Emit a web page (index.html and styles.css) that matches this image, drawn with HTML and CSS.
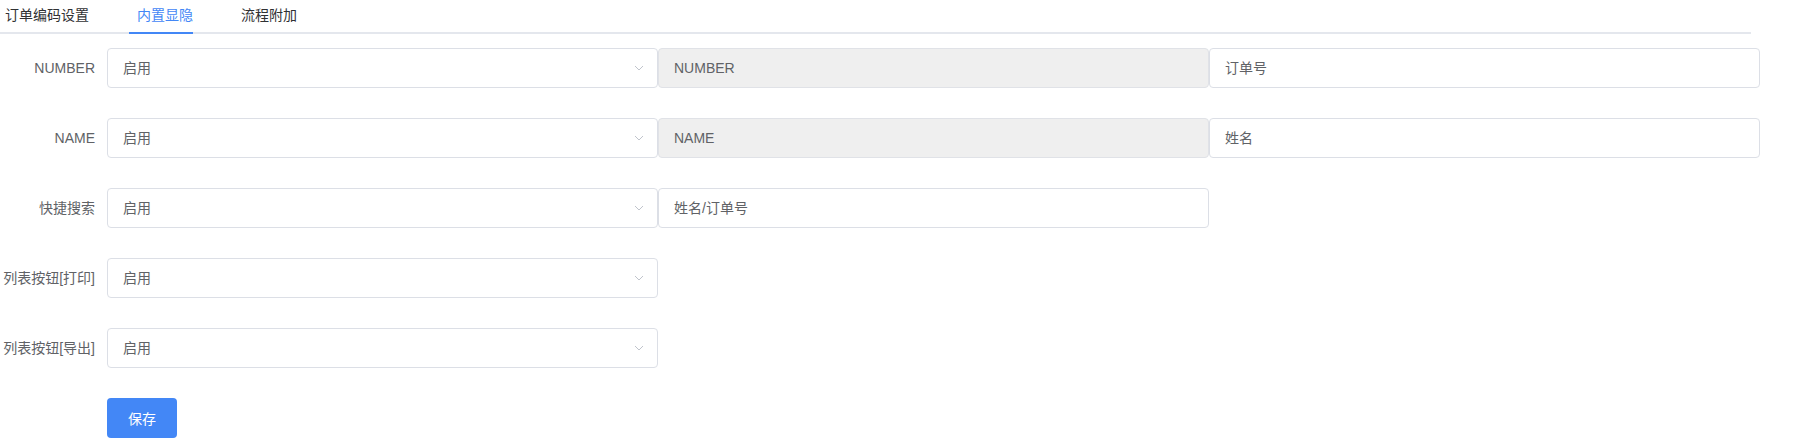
FILE: index.html
```html
<!DOCTYPE html>
<html lang="zh-CN">
<head>
<meta charset="utf-8">
<title>内置显隐</title>
<link rel="stylesheet" href="styles.css">
</head>
<body>
<div class="page">
  <div class="tabs">
    <div class="tab tab-first">订单编码设置</div>
    <div class="tab tab-active">内置显隐<span class="active-bar"></span></div>
    <div class="tab tab-last">流程附加</div>
  </div>

  <form class="form">
    <div class="row">
      <label class="label">NUMBER</label>
      <div class="select"><span class="value">启用</span><svg class="arrow" width="10" height="6" viewBox="0 0 10 6"><polyline points="1,1 5,5 9,1" fill="none" stroke="#c0c4cc" stroke-width="1"/></svg></div>
      <div class="input input-disabled">NUMBER</div>
      <div class="input">订单号</div>
    </div>
    <div class="row">
      <label class="label">NAME</label>
      <div class="select"><span class="value">启用</span><svg class="arrow" width="10" height="6" viewBox="0 0 10 6"><polyline points="1,1 5,5 9,1" fill="none" stroke="#c0c4cc" stroke-width="1"/></svg></div>
      <div class="input input-disabled">NAME</div>
      <div class="input">姓名</div>
    </div>
    <div class="row">
      <label class="label">快捷搜索</label>
      <div class="select"><span class="value">启用</span><svg class="arrow" width="10" height="6" viewBox="0 0 10 6"><polyline points="1,1 5,5 9,1" fill="none" stroke="#c0c4cc" stroke-width="1"/></svg></div>
      <div class="input">姓名/订单号</div>
    </div>
    <div class="row">
      <label class="label">列表按钮[打印]</label>
      <div class="select"><span class="value">启用</span><svg class="arrow" width="10" height="6" viewBox="0 0 10 6"><polyline points="1,1 5,5 9,1" fill="none" stroke="#c0c4cc" stroke-width="1"/></svg></div>
    </div>
    <div class="row">
      <label class="label">列表按钮[导出]</label>
      <div class="select"><span class="value">启用</span><svg class="arrow" width="10" height="6" viewBox="0 0 10 6"><polyline points="1,1 5,5 9,1" fill="none" stroke="#c0c4cc" stroke-width="1"/></svg></div>
    </div>
    <div class="actions">
      <button type="button" class="btn-primary">保存</button>
    </div>
  </form>
</div>
</body>
</html>
```

FILE: styles.css
```css
* { box-sizing: border-box; }
html, body {
  margin: 0;
  padding: 0;
  background: #ffffff;
}
body {
  font-family: "Liberation Sans", "Noto Sans CJK SC", sans-serif;
  font-size: 14px;
  color: #606266;
}
.page {
  width: 1803px;
}
.tabs {
  display: flex;
  width: 1751px;
  height: 34px;
  border-bottom: 2px solid #e4e7ed;
}
.tab {
  position: relative;
  height: 32px;
  line-height: 30px;
  padding: 0 24px;
  color: #303133;
  font-size: 14px;
  white-space: nowrap;
}
.tab-first { padding-left: 5px; }
.tab-active { color: #4387f6; }
.active-bar {
  position: absolute;
  left: 16px;
  bottom: -2px;
  width: 64px;
  height: 2px;
  background: #4387f6;
}
.form {
  margin-top: 14px;
}
.row {
  display: grid;
  grid-template-columns: 107px 551px 551px 551px;
  height: 40px;
  margin-bottom: 30px;
}
.label {
  text-align: right;
  padding-right: 12px;
  line-height: 40px;
  color: #606266;
  white-space: nowrap;
}
.select, .input {
  height: 40px;
  border: 1px solid #dcdfe6;
  border-radius: 4px;
  padding: 0 15px;
  line-height: 38px;
  color: #606266;
  background: #fff;
  white-space: nowrap;
}
.select {
  display: flex;
  align-items: center;
  justify-content: space-between;
  padding-right: 13px;
}
.select .value { line-height: 38px; }
.arrow { display: block; }
.input-disabled {
  background: #efefef;
  border-color: #e0e2e7;
  color: #606266;
}
.actions {
  padding-left: 107px;
}
.btn-primary {
  width: 70px;
  height: 40px;
  border: none;
  border-radius: 4px;
  background: #4387f6;
  color: #fff;
  font-family: "Liberation Sans", "Noto Sans CJK SC", sans-serif;
  font-size: 14px;
  padding: 0;
  cursor: pointer;
}
```
